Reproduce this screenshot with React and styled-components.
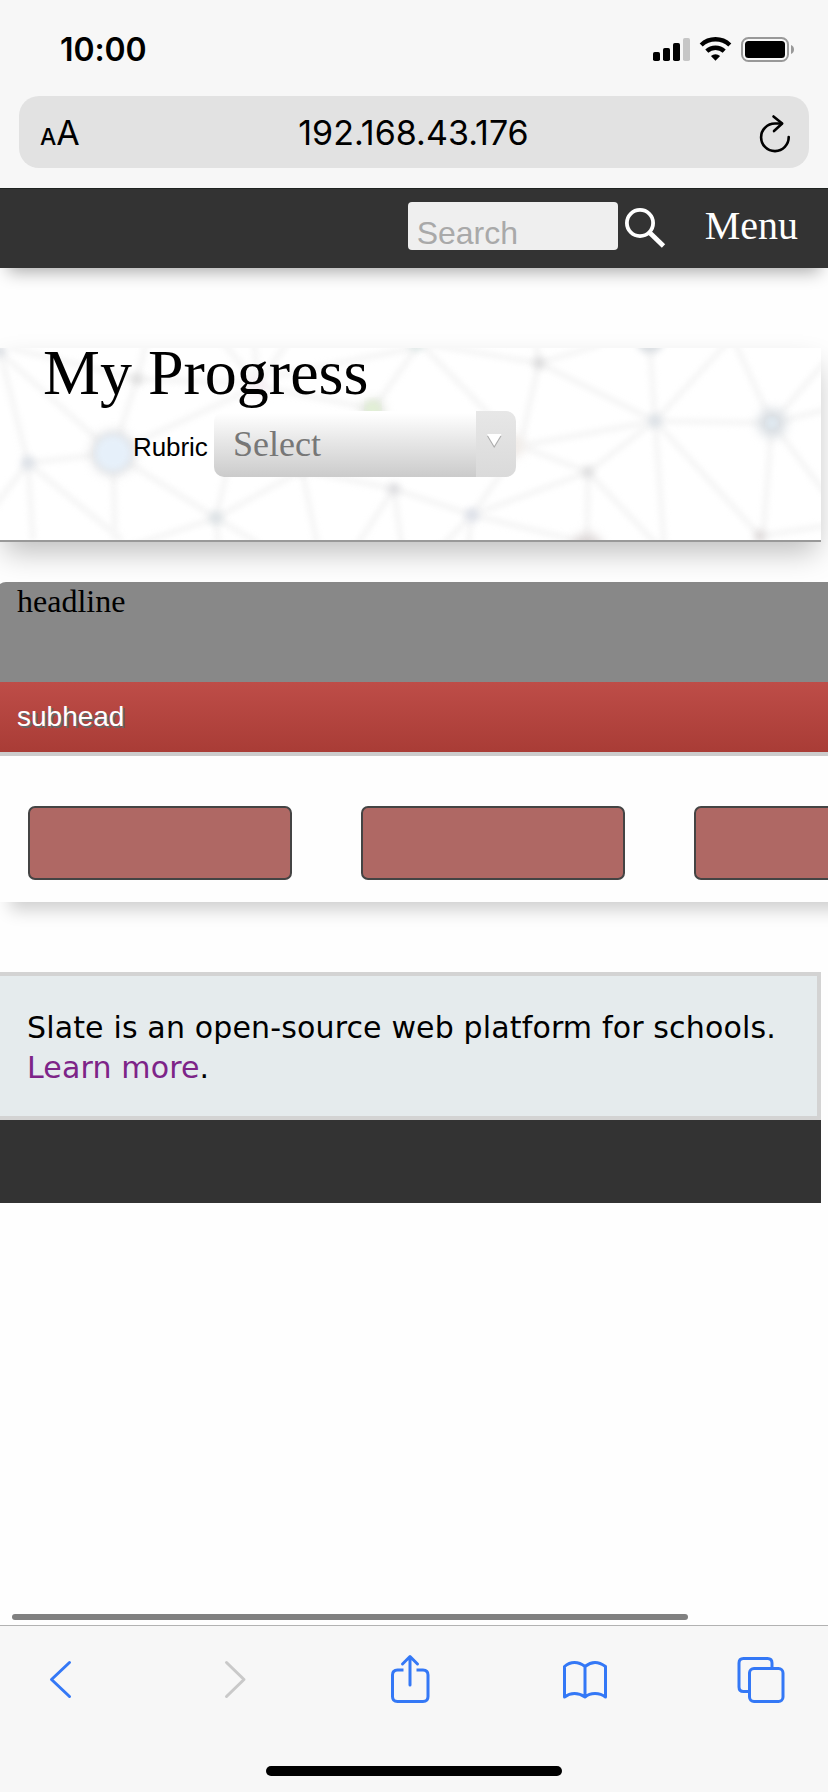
import React from "react";
import styled, { createGlobalStyle } from "styled-components";

const sans = `"Liberation Sans", Helvetica, Arial, sans-serif`;
const serif = `"Liberation Serif", "Times New Roman", serif`;
const system = `Inter, sans-serif`;
const blue = "#3478f6";

const GlobalStyle = createGlobalStyle`
  * { box-sizing: border-box; }
  body { margin: 0; background: #fefefe; }
`;

const Screen = styled.div`
  display: flex;
  flex-direction: column;
  width: 828px;
  height: 1792px;
  overflow: hidden;
  background: #fefefe;
  color: #000;
`;

const Chrome = styled.div`
  flex: none;
  height: 188px;
  background: #f7f7f7;
`;

const StatusBar = styled.div`
  display: flex;
  justify-content: space-between;
  height: 96px;
  padding: 34px 34px 0 60px;
`;

const Time = styled.div`
  font: 600 32px/32px ${system};
  letter-spacing: -0.1px;
`;

const StatusIcons = styled.svg`
  display: block;
  margin-top: 2px;
`;

const AddressBar = styled.div`
  display: grid;
  grid-template-columns: 60px 1fr 60px;
  align-items: center;
  height: 72px;
  margin: 0 19px;
  padding: 0 17px 0 21px;
  border-radius: 20px;
  background: #e2e2e2;
`;

const TextSize = styled.div`
  display: flex;
  align-items: baseline;
  gap: 1px;
  font: 400 34px/72px ${system};
  letter-spacing: -1px;
  padding-top: 1px;
`;

const SmallA = styled.span`
  font-size: 23px;
  font-weight: 500;
`;

const Address = styled.div`
  padding: 0 5px 5px 0;
  text-align: center;
  font: 400 34px/67px ${system};
  letter-spacing: 0.02px;
`;

const Reload = styled.svg`
  justify-self: end;
  margin-bottom: 4px;
`;

const SiteHeader = styled.header`
  flex: none;
  display: flex;
  justify-content: flex-end;
  height: 80px;
  padding: 14px 30px 0 0;
  background: #333;
  border-top: 1px solid #1f2321;
  box-shadow: 0 12px 16px -8px rgba(0, 0, 0, 0.33);
`;

const SearchBox = styled.div`
  width: 210px;
  height: 48px;
  margin-top: -1px;
  padding: 14px 0 0 9px;
  border-radius: 4px;
  background: #efefef;
  color: #a9a9a9;
  font: 32px/34px ${sans};
`;

const SearchIcon = styled.svg`
  margin: 3px 0 0 5px;
`;

const MenuLink = styled.div`
  margin-left: 38px;
  color: #fff;
  font: 40px/46px ${serif};
`;

const Hero = styled.section`
  flex: none;
  position: relative;
  width: 821px;
  height: 194px;
  margin-top: 80px;
  padding-left: 43px;
  border-bottom: 2px solid #999;
  background: #fff;
  box-shadow: 0 14px 28px -4px rgba(0, 0, 0, 0.26);
`;

const Network = styled.svg`
  position: absolute;
  left: 0;
  top: 0;
`;

const Title = styled.h1`
  position: relative;
  margin: 0;
  font: 400 64px/49px ${serif};
`;

const Field = styled.div`
  position: relative;
  display: flex;
  margin: 14px 0 0 90px;
`;

const FieldLabel = styled.label`
  width: 81px;
  padding: 6px 0 0 0;
  font: 26px/60px ${sans};
  letter-spacing: -0.1px;
`;

const Select = styled.div`
  display: flex;
  width: 302px;
  height: 66px;
  border-radius: 10px;
  overflow: hidden;
`;

const SelectValue = styled.div`
  width: 262px;
  padding-left: 19px;
  background: linear-gradient(#fff 3%, #e9e9e9 42%, #cbcbcb);
  color: #777;
  font: 36px/66px ${serif};
`;

const SelectArrow = styled.div`
  width: 40px;
  padding: 22px 0 0 10px;
  background: linear-gradient(#e7e7e7, #dadada);
`;

const Panel = styled.section`
  flex: none;
  width: 1048px;
  height: 320px;
  margin: 40px 0 0 -4px;
  border-radius: 10px 10px 0 0;
  background: #fefefe;
  box-shadow: 0 22px 16px -14px rgba(0, 0, 0, 0.19);
`;

const PanelHeadline = styled.div`
  height: 100px;
  padding-left: 21px;
  border-radius: 10px 10px 0 0;
  background: #888;
  font: 32px/38px ${serif};
`;

const PanelSubhead = styled.div`
  height: 74px;
  padding-left: 21px;
  border-bottom: 4px solid #ccc;
  background: linear-gradient(#be4d48, #a93c36);
  color: #fff;
  font: 28px/69px ${sans};
  text-shadow: 2px 2px 0 #666;
`;

const PanelButtons = styled.div`
  display: flex;
  gap: 69px;
  padding: 50px 32px 0;
`;

const PanelButton = styled.button`
  flex: none;
  width: 264px;
  height: 74px;
  border: 2px solid #444;
  border-radius: 7px;
  background: #af6864;
`;

const About = styled.section`
  flex: none;
  width: 821px;
  height: 148px;
  margin-top: 70px;
  padding: 32px 0 0 27px;
  border: 4px solid #d3d3d3;
  border-left: 0;
  background: #e5ebed;
  font: 30px/40px "DejaVu Sans", Verdana, sans-serif;
  letter-spacing: 0.15px;
  white-space: nowrap;
`;

const Learn = styled.a`
  color: #7d2488;
`;

const SiteFooter = styled.footer`
  flex: none;
  width: 821px;
  height: 83px;
  background: #333;
`;

const ScrollThumb = styled.div`
  flex: none;
  width: 676px;
  height: 6px;
  margin: auto 0 5px 12px;
  border-radius: 3px;
  background: #808080;
`;

const Toolbar = styled.nav`
  flex: none;
  display: flex;
  flex-direction: column;
  justify-content: space-between;
  align-items: center;
  height: 167px;
  padding-bottom: 16px;
  border-top: 1px solid #b2b2b2;
  background: #f7f7f7;
`;

const ToolIcons = styled.div`
  display: flex;
  justify-content: space-between;
  width: 100%;
  padding: 26px 40px 0 38px;
`;

const ToolIcon = styled.svg`
  overflow: visible;
  fill: none;
  stroke: ${(p) => p.$color || blue};
  stroke-width: 3;
  stroke-linecap: round;
  stroke-linejoin: round;
`;

const HomeIndicator = styled.div`
  width: 296px;
  height: 10px;
  border-radius: 5px;
  background: #000;
`;

const edges = [
  [0, 4, 28, 115], [28, 115, 113, 105], [28, 115, 33, 192], [28, 115, 122, 192],
  [28, 115, -30, 190], [113, 105, -5, 0], [113, 105, 137, 31], [137, 31, 10, 0],
  [137, 31, 150, -20], [137, 31, 258, 36], [113, 105, 258, 38], [258, 38, 373, 61],
  [258, 38, 220, -10], [258, 38, 254, -10], [258, 38, 290, -10], [113, 105, 216, 170],
  [113, 105, 115, 192], [216, 170, 110, 205], [216, 170, 302, 122], [216, 170, 218, 195],
  [216, 170, 258, 195], [302, 122, 394, 141], [302, 122, 317, 195], [216, 170, 230, 110],
  [394, 141, 355, 200], [394, 141, 402, 200], [394, 141, 472, 167], [373, 61, 420, -5],
  [275, 28, 414, 0], [420, -5, 520, 98], [420, -5, 539, 15], [539, 15, 520, 98],
  [539, 15, 600, -3], [539, 15, 536, -5], [539, 15, 655, 73], [650, 0, 655, 73],
  [655, 73, 727, -5], [655, 73, 772, 75], [655, 73, 520, 98], [655, 73, 588, 124],
  [655, 73, 664, 195], [655, 73, 760, 188], [520, 98, 588, 124], [588, 124, 472, 167],
  [588, 124, 587, 192], [588, 124, 660, 200], [472, 167, 520, 98], [472, 167, 440, 200],
  [472, 167, 468, 200], [472, 167, 587, 195], [772, 75, 735, -5], [772, 75, 825, 14],
  [772, 75, 825, 62], [772, 75, 763, 188], [772, 75, 825, 145], [760, 188, 825, 178],
];

const nodes = [
  [137, 31, 6, "#dedede"], [28, 115, 7, "#dde1e7"], [216, 170, 7, "#dde2e5"],
  [394, 141, 6, "#dddde0"], [0, 3, 6, "#dcdfe4"], [539, 15, 6, "#dbdbdc"],
  [655, 73, 7, "#dce1e6"], [588, 124, 6, "#dededf"], [472, 167, 7, "#dde0e8"],
  [760, 188, 6, "#dfdbdb"], [302, 122, 5, "#e2e2e2"], [650, -9, 14, "#d8dce0"],
  [416, -5, 8, "#dce6e5"],
];

function NetworkPattern() {
  return (
    <Network width="821" height="192" viewBox="0 0 821 192" aria-hidden="true">
      <defs>
        <filter id="line-blur" x="-5%" y="-5%" width="110%" height="110%" colorInterpolationFilters="sRGB">
          <feGaussianBlur stdDeviation="2.5" />
        </filter>
        <filter id="node-blur" x="-5%" y="-20%" width="110%" height="140%" colorInterpolationFilters="sRGB">
          <feGaussianBlur stdDeviation="3.6" />
        </filter>
        <filter id="halo-blur" x="-10%" y="-20%" width="120%" height="140%" colorInterpolationFilters="sRGB">
          <feGaussianBlur stdDeviation="5.5" />
        </filter>
      </defs>
      <g filter="url(#line-blur)" stroke="#f7f7f7" strokeWidth="7">
        {edges.map(([a, b, c, d], i) => (
          <line key={i} x1={a} y1={b} x2={c} y2={d} />
        ))}
      </g>
      <g filter="url(#node-blur)">
        {nodes.map(([x, y, r, fill], i) => (
          <circle key={i} cx={x} cy={y} r={r} fill={fill} />
        ))}
      </g>
      <g filter="url(#halo-blur)">
        <circle cx="113" cy="105" r="22" fill="#dedfe1" />
        <circle cx="373" cy="63" r="11" fill="#dadfd5" />
        <circle cx="772" cy="75" r="14" fill="#d8dde2" />
        <circle cx="587" cy="201" r="15" fill="#dad4d4" />
        <circle cx="513" cy="98" r="11" fill="#f0ebe7" />
        <circle cx="258" cy="38" r="9" fill="#f6edf3" />
      </g>
      <circle cx="113" cy="105" r="18" fill="#e6f0fa" filter="url(#node-blur)" />
      <circle cx="373" cy="61" r="8" fill="#e2f0d6" filter="url(#node-blur)" />
      <circle cx="772" cy="75" r="6" fill="#dfe8ef" filter="url(#line-blur)" />
    </Network>
  );
}

export default function App() {
  return (
    <Screen>
      <GlobalStyle />
      <Chrome>
        <StatusBar>
          <Time>10:00</Time>
          <StatusIcons width="142" height="28" viewBox="0 0 142 28">
            <rect x="1" y="16" width="7" height="9" rx="1.8" />
            <rect x="11" y="12" width="7" height="13" rx="1.8" />
            <rect x="21" y="7" width="7" height="18" rx="1.8" />
            <rect x="31" y="2" width="7" height="23" rx="1.8" fill="#c6c6c6" />
            <g fill="none" stroke="#000" strokeWidth="4.4">
              <path d="M49.2 9a20.8 20.8 0 0 1 28.6 0" />
              <path d="M54.8 15.200a12.600 12.600 0 0 1 17.400 0" />
            </g>
            <path d="M63.500 24.700l-4.600-4.800a6.900 6.900 0 0 1 9.200 0z" />
            <rect x="90" y="2" width="46" height="23" rx="6.500" fill="none" stroke="#999" strokeWidth="2" />
            <rect x="93" y="5" width="40" height="17" rx="3.500" />
            <path d="M139 9c4 1.500 4 7.500 0 9z" fill="#999" />
          </StatusIcons>
        </StatusBar>
        <AddressBar>
          <TextSize>
            <SmallA>A</SmallA>
            <span>A</span>
          </TextSize>
          <Address>192.168.43.176</Address>
          <Reload width="34" height="40" viewBox="0 0 34 40" fill="none" stroke="#000" strokeWidth="2.600" strokeLinecap="round" strokeLinejoin="round">
            <path d="M30.700 24a13.800 13.800 0 1 1-13.800-13.500h6.500" />
            <path d="M15.500 3.500l8.700 7-8.200 7.500" />
          </Reload>
        </AddressBar>
      </Chrome>

      <SiteHeader>
        <SearchBox>Search</SearchBox>
        <SearchIcon width="44" height="44" viewBox="0 0 44 44" fill="none" stroke="#fff">
          <circle cx="17" cy="17" r="13.100" strokeWidth="3.800" />
          <path d="M26.500 26.500L40.500 40" strokeWidth="4.800" />
        </SearchIcon>
        <MenuLink>Menu</MenuLink>
      </SiteHeader>

      <Hero>
        <NetworkPattern />
        <Title>My Progress</Title>
        <Field>
          <FieldLabel>Rubric</FieldLabel>
          <Select>
            <SelectValue>Select</SelectValue>
            <SelectArrow>
              <svg width="18" height="18" viewBox="0 0 18 18" display="block">
                <path d="M1 3h14.500L8.200 15z" fill="#aaa" />
                <path d="M1 1h14.500L8.200 13z" fill="#fff" />
              </svg>
            </SelectArrow>
          </Select>
        </Field>
      </Hero>

      <Panel>
        <PanelHeadline>headline</PanelHeadline>
        <PanelSubhead>subhead</PanelSubhead>
        <PanelButtons>
          <PanelButton />
          <PanelButton />
          <PanelButton />
        </PanelButtons>
      </Panel>

      <About>
        Slate is an open-source web platform for schools.
        <br />
        <Learn>Learn more</Learn>.
      </About>
      <SiteFooter />

      <ScrollThumb />
      <Toolbar>
        <ToolIcons>
          <ToolIcon width="44" height="56" viewBox="0 0 44 56">
            <path d="M31.500 10.500L13.500 27.500L31.500 44.500" />
          </ToolIcon>
          <ToolIcon $color="#c9c9c9" width="44" height="56" viewBox="0 0 44 56">
            <path d="M13.500 10.500L31 27.500L13.500 44.500" />
          </ToolIcon>
          <ToolIcon width="44" height="56" viewBox="0 0 44 56">
            <path d="M15.500 18H9.500q-5 0-5 5V44.500q0 5 5 5H35q5 0 5-5V23q0-5-5-5H28.500" strokeLinecap="butt" />
            <path d="M22 33V5M14.500 12L22 4.500L29.500 12" />
          </ToolIcon>
          <ToolIcon width="44" height="56" viewBox="0 0 44 56">
            <path d="M22 14.500V45M22 14.500Q17 10.500 11.500 10.500T1.500 14.500V45Q6 41.500 11.500 41.500T22 45M22 14.500Q27 10.500 32 10.500T42.500 14.500V45Q38 41.500 32 41.500T22 45" />
          </ToolIcon>
          <ToolIcon width="50" height="56" viewBox="0 0 50 56">
            <path d="M11 39.500H5.500q-4.500 0-4.500-4.500V11q0-4.500 4.500-4.500H29.500q4.500 0 4.500 4.500V16.500" />
            <rect x="11.500" y="16.500" width="33.500" height="33" rx="4.500" />
          </ToolIcon>
        </ToolIcons>
        <HomeIndicator />
      </Toolbar>
    </Screen>
  );
}
